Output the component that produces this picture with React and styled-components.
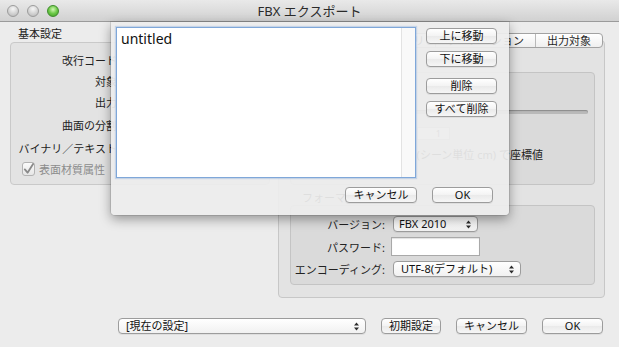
import React from "react";
import styled, { createGlobalStyle } from "styled-components";

const GlobalStyle = createGlobalStyle`
  html, body {
    margin: 0;
    padding: 0;
    background: #ececec;
  }
  body {
    font-family: "Noto Sans", "Noto Sans CJK JP", sans-serif;
    font-size: 11px;
    color: #1e1e1e;
  }
  * {
    box-sizing: border-box;
  }
`;

const Window = styled.div`
  position: relative;
  width: 619px;
  height: 347px;
  display: flex;
  flex-direction: column;
  background: #ececec;
  overflow: hidden;
`;

const TitleBar = styled.div`
  height: 22px;
  flex-shrink: 0;
  display: grid;
  grid-template-columns: 1fr auto 1fr;
  align-items: center;
  background: linear-gradient(#e9e9e9, #d1d1d1);
  border-bottom: 1px solid #9b9b9b;
`;

const Lights = styled.div`
  display: flex;
  gap: 8px;
  padding-left: 7px;
`;

const Light = styled.span`
  width: 12px;
  height: 12px;
  border-radius: 50%;
  border: 1px solid ${(p) => (p.$green ? "#3f8c2c" : "#9c9c9c")};
  background: ${(p) =>
    p.$green
      ? "radial-gradient(circle at 50% 35%, #d2f7b4 0%, #6cc947 50%, #3f9b25 100%)"
      : "radial-gradient(circle at 50% 30%, #f6f6f6 0%, #cfcfcf 60%, #b4b4b4 100%)"};
`;

const Title = styled.div`
  font-size: 13px;
  color: #2a2a2a;
  line-height: 16px;
`;

const Body = styled.div`
  flex: 1;
  display: flex;
  flex-direction: column;
  padding: 0 14px 13px 10px;
`;

const Main = styled.div`
  display: flex;
  gap: 8px;
  height: 276px;
`;

const LeftCol = styled.div`
  width: 260px;
  flex-shrink: 0;
  padding-top: 5px;
`;

const SectionLabel = styled.div`
  line-height: 13px;
  padding-left: ${(p) => p.$indent || 8}px;
  padding-top: ${(p) => p.$top || 0}px;
  height: ${(p) => p.$h || 13}px;
  flex-shrink: 0;
  color: #222;
`;

const GroupBox = styled.div`
  margin-top: 2px;
  height: 143px;
  padding: 6px 0 0 11px;
  background: #e3e3e3;
  border: 1px solid #c9c9c9;
  border-radius: 4px;
`;

const FormRow = styled.div`
  display: flex;
  align-items: center;
  height: ${(p) => p.$h}px;
`;

const RowLabel = styled.div`
  width: 98px;
  display: flex;
  justify-content: flex-end;
  white-space: nowrap;
  color: #222;
`;

const CheckRow = styled.label`
  display: flex;
  align-items: center;
  gap: 4px;
  height: 22px;
  color: #8c8c8c;
`;

const CheckBox = styled.span`
  width: 13px;
  height: 14px;
  border: 1px solid #b3b3b3;
  border-radius: 3px;
  background: linear-gradient(#fbfbfb, #e6e6e6);
  display: flex;
  align-items: center;
  justify-content: center;
`;

const RightCol = styled.div`
  flex: 1;
  min-width: 0;
  display: flex;
  flex-direction: column;
  padding-top: 11px;
`;

const Tabs = styled.div`
  position: relative;
  z-index: 1;
  align-self: flex-end;
  margin-right: 2px;
  display: flex;
  height: 15px;
  border: 1px solid #a2a2a2;
  border-radius: 4px;
  background: linear-gradient(#ffffff, #efefef);
`;

const Tab = styled.div`
  padding: 0 11px;
  line-height: 13px;
  white-space: nowrap;
  & + & {
    border-left: 1px solid #b9b9b9;
  }
`;

const TabPane = styled.div`
  margin-top: -8px;
  height: 258px;
  padding: 31px 9px 12px 11px;
  background: #e3e3e3;
  border: 1px solid #c7c7c7;
  border-radius: 4px;
  display: flex;
  flex-direction: column;
`;

const InnerGroup = styled.div`
  height: ${(p) => p.$h}px;
  flex-shrink: 0;
  background: #dadada;
  border: 1px solid #c4c4c4;
  border-radius: 4px;
  overflow: hidden;
`;

const ScaleGroup = styled(InnerGroup)`
  padding: 37px 6px 0 9px;
  display: flex;
  flex-direction: column;
`;

const Track = styled.div`
  height: 4px;
  flex-shrink: 0;
  border-radius: 2px;
  background: #b9b9b9;
  box-shadow: inset 0 1px 1px rgba(0, 0, 0, 0.25);
`;

const SmallField = styled.div`
  margin: 13px 0 0 117px;
  width: 33px;
  height: 13px;
  flex-shrink: 0;
  background: #f3f3f3;
  border: 1px solid #c4c4c4;
  font-size: 9px;
  line-height: 11px;
  text-align: right;
  padding-right: 8px;
  color: #555;
`;

const Note = styled.div`
  margin: 9px 0 0 7px;
  line-height: 12px;
  white-space: nowrap;
  color: #222;
`;

const FormatGroup = styled(InnerGroup)`
  padding-top: 10px;
  display: grid;
  grid-template-columns: 94px auto;
  column-gap: 8px;
  row-gap: 5px;
  align-content: start;
  justify-items: start;
  align-items: center;
`;

const GridLabel = styled.div`
  justify-self: end;
  white-space: nowrap;
  color: #222;
`;

const Popup = styled.div`
  width: ${(p) => p.$w}px;
  height: 16px;
  display: flex;
  align-items: center;
  justify-content: space-between;
  padding: 0 6px 0 ${(p) => p.$pad || 5}px;
  border: 1px solid #9c9c9c;
  border-radius: 4px;
  background: linear-gradient(#ffffff, #f1f1f1);
  box-shadow: 0 1px 0 rgba(0, 0, 0, 0.06);
  line-height: 14px;
  white-space: nowrap;
  color: #111;
`;

const TextField = styled.div`
  width: 89px;
  height: 19px;
  margin-left: -2px;
  background: #fff;
  border: 1px solid #a9a9a9;
  box-shadow: inset 0 1px 1px rgba(0, 0, 0, 0.12);
`;

const BottomRow = styled.div`
  margin-top: 20px;
  display: flex;
  justify-content: flex-end;
  align-items: center;
  gap: 15px;
  padding-right: 2px;
`;

const Button = styled.button`
  width: ${(p) => p.$w}px;
  height: 16px;
  margin-top: ${(p) => p.$mt || 0}px;
  padding: 0;
  font-family: inherit;
  font-size: 11px;
  line-height: 14px;
  color: #111;
  border: 1px solid #9c9c9c;
  border-radius: 4px;
  background: linear-gradient(#ffffff, #f3f3f3 50%, #eaeaea 51%, #f6f6f6);
  box-shadow: 0 1px 0 rgba(0, 0, 0, 0.06);
  white-space: nowrap;
`;

const Sheet = styled.div`
  position: absolute;
  left: 111px;
  top: 22px;
  width: 398px;
  height: 193px;
  z-index: 10;
  padding: 5px 12px 12px 5px;
  display: flex;
  flex-direction: column;
  background: rgba(237, 237, 237, 0.93);
  border-radius: 0 0 4px 4px;
  box-shadow: 0 4px 12px rgba(0, 0, 0, 0.38), 0 0 0 1px rgba(0, 0, 0, 0.1);
`;

const SheetTop = styled.div`
  display: flex;
  gap: 10px;
`;

const ListBox = styled.div`
  width: 301px;
  height: 151px;
  display: flex;
  background: #fff;
  border: 1px solid #7fa7d9;
  box-shadow: 0 0 1px 1px rgba(127, 167, 217, 0.35);
`;

const ListItems = styled.div`
  flex: 1;
  padding: 2px 4px;
  font-family: "Noto Sans", sans-serif;
  font-size: 14px;
  line-height: 17px;
  color: #111;
`;

const ScrollTrack = styled.div`
  width: 14px;
  background: #f9f9f9;
  border-left: 1px solid #e3e3e3;
`;

const ButtonColumn = styled.div`
  display: flex;
  flex-direction: column;
  padding-top: 1px;
`;

const SheetBottom = styled.div`
  margin-top: 9px;
  display: flex;
  justify-content: flex-end;
  gap: 15px;
  padding-right: 4px;
`;

const Arrows = () => (
  <svg width="5" height="9" viewBox="0 0 5 9">
    <path d="M0 3.5 L2.5 0.5 L5 3.5 Z M0 5.5 L2.5 8.5 L5 5.5 Z" fill="#2c2c2c" />
  </svg>
);

const Check = () => (
  <svg width="12" height="12" viewBox="0 0 12 12">
    <path
      d="M2 6.5 L5 10 L11 0.5"
      fill="none"
      stroke="#8a8a8a"
      strokeWidth="2"
      strokeLinecap="round"
      strokeLinejoin="round"
    />
  </svg>
);

const leftRows = [
  { label: "改行コード:", h: 21 },
  { label: "対象:", h: 21 },
  { label: "出力:", h: 21 },
  { label: "曲面の分割:", h: 26 },
  { label: "バイナリ／テキスト:", h: 20 },
];

export default function App() {
  return (
    <>
      <GlobalStyle />
      <Window>
        <TitleBar>
          <Lights>
            <Light />
            <Light />
            <Light $green />
          </Lights>
          <Title>FBX エクスポート</Title>
          <div />
        </TitleBar>

        <Body>
          <Main>
            <LeftCol>
              <SectionLabel>基本設定</SectionLabel>
              <GroupBox>
                {leftRows.map((r) => (
                  <FormRow key={r.label} $h={r.h}>
                    <RowLabel>{r.label}</RowLabel>
                  </FormRow>
                ))}
                <CheckRow>
                  <CheckBox>
                    <Check />
                  </CheckBox>
                  表面材質属性
                </CheckRow>
              </GroupBox>
            </LeftCol>

            <RightCol>
              <Tabs>
                <Tab>ジオメトリ</Tab>
                <Tab>アニメーション</Tab>
                <Tab>出力対象</Tab>
              </Tabs>
              <TabPane>
                <ScaleGroup $h={113}>
                  <Track />
                  <SmallField>1</SmallField>
                  <Note>
                    シーン単位から、FBX (シーン単位 cm) で座標値
                    <br />
                    を変換しました。
                  </Note>
                </ScaleGroup>
                <SectionLabel $indent={12} $top={6} $h={20}>
                  フォーマット
                </SectionLabel>
                <FormatGroup $h={80}>
                  <GridLabel>バージョン:</GridLabel>
                  <Popup $w={85}>
                    FBX 2010
                    <Arrows />
                  </Popup>
                  <GridLabel>パスワード:</GridLabel>
                  <TextField />
                  <GridLabel>エンコーディング:</GridLabel>
                  <Popup $w={128} $pad={7}>
                    UTF-8(デフォルト)
                    <Arrows />
                  </Popup>
                </FormatGroup>
              </TabPane>
            </RightCol>
          </Main>

          <BottomRow>
            <Popup $w={248} $pad={7}>
              [現在の設定]
              <Arrows />
            </Popup>
            <Button $w={60}>初期設定</Button>
            <Button $w={71}>キャンセル</Button>
            <Button $w={61}>OK</Button>
          </BottomRow>
        </Body>

        <Sheet>
          <SheetTop>
            <ListBox>
              <ListItems>untitled</ListItems>
              <ScrollTrack />
            </ListBox>
            <ButtonColumn>
              <Button $w={71}>上に移動</Button>
              <Button $w={71} $mt={7}>
                下に移動
              </Button>
              <Button $w={71} $mt={11}>
                削除
              </Button>
              <Button $w={71} $mt={7}>
                すべて削除
              </Button>
            </ButtonColumn>
          </SheetTop>
          <SheetBottom>
            <Button $w={72}>キャンセル</Button>
            <Button $w={61}>OK</Button>
          </SheetBottom>
        </Sheet>
      </Window>
    </>
  );
}
